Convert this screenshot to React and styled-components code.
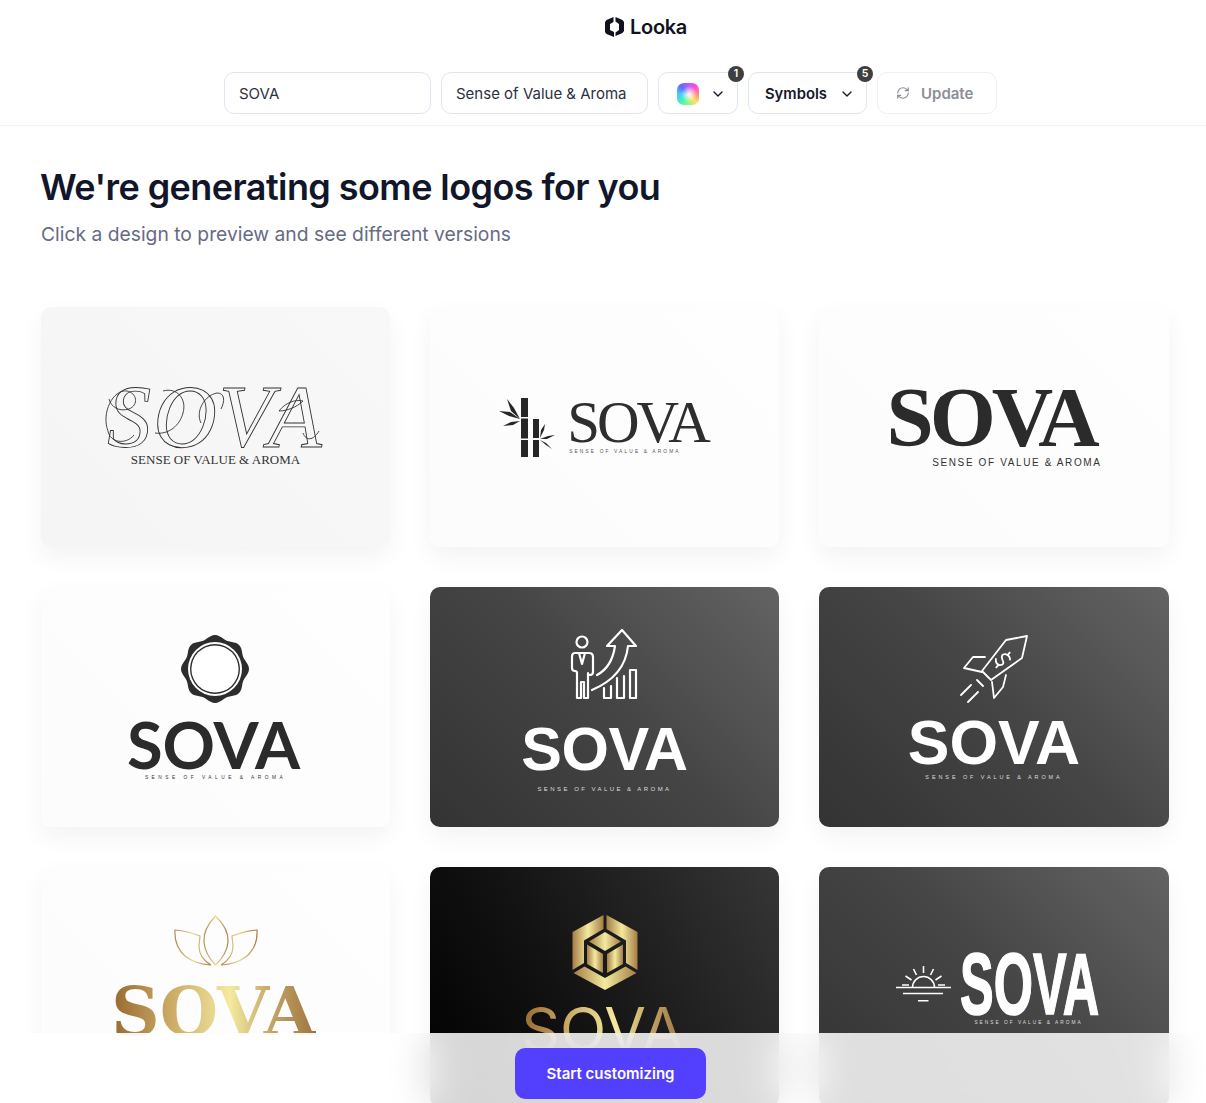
import React from "react";
import styled, { createGlobalStyle } from "styled-components";
import { ChevronDown, RefreshCw } from "lucide-react";

const GlobalStyle = createGlobalStyle`
  html, body {
    margin: 0;
    padding: 0;
    height: 100%;
    overflow: hidden;
    background: #fff;
    font-family: Inter, "Liberation Sans", sans-serif;
  }
  * { box-sizing: border-box; }
`;

const GOLD = "linear-gradient(90deg, #95682f 0%, #c9a863 28%, #f3ea9f 58%, #c5a566 78%, #9c7440 100%)";
const SERIF = '"Liberation Serif", serif';
const ARIAL = '"Liberation Sans", sans-serif';

const Page = styled.div`
  height: 100vh;
  overflow: hidden;
  color: #12162a;
`;

const Header = styled.header`
  height: 126px;
  border-bottom: 1px solid #f1f2f5;
  padding-top: 15px;
`;

const Brand = styled.div`
  display: flex;
  align-items: center;
  gap: 6px;
  padding-left: 605px;
  height: 24px;
  font-size: 20px;
  font-weight: 600;
  letter-spacing: -0.3px;
  color: #10131f;
`;

const Toolbar = styled.div`
  display: flex;
  gap: 10px;
  margin-top: 33px;
  padding-left: 224px;
`;

const Field = styled.div`
  position: relative;
  display: flex;
  align-items: center;
  width: ${(p) => p.$w}px;
  height: 42px;
  padding: 0 14px;
  border: 1px solid ${(p) => (p.$muted ? "#eef0f5" : "#dfe5f2")};
  border-radius: 10px;
  background: #fff;
  font-size: 15px;
  color: #2d3140;
`;

const Select = styled(Field)`
  justify-content: space-between;
  padding: 1px 11px 0 ${(p) => p.$left}px;
  font-size: 14.8px;
  font-weight: 600;
  color: #14182a;
`;

const UpdateButton = styled(Field)`
  gap: 11px;
  padding: 0 0 0 18px;
  font-size: 15px;
  font-weight: 600;
  color: #8b8e96;
`;

const Swatch = styled.span`
  width: 22px;
  height: 22px;
  border-radius: 7px;
  background:
    radial-gradient(circle at 55% 50%, rgba(255, 255, 255, 0.95) 0%, rgba(255, 255, 255, 0) 50%),
    conic-gradient(#b45cff, #ff4fd0 45deg, #ff8a80 90deg, #ffe060 135deg, #8cf58a 180deg, #3ff0c0 225deg, #4cc8ff 270deg, #5a70ff 315deg, #b45cff);
`;

const Badge = styled.span`
  position: absolute;
  top: -7px;
  right: -7px;
  width: 16px;
  height: 16px;
  border-radius: 50%;
  background: #3f3f3f;
  color: #fff;
  font-size: 10.5px;
  font-weight: 600;
  line-height: 16px;
  text-align: center;
`;

const Main = styled.main`
  padding: 38px 37px 0 41px;
`;

const Title = styled.h1`
  margin: 0 0 0 -1px;
  font-size: 36px;
  line-height: 46px;
  font-weight: 600;
  letter-spacing: -0.58px;
  color: #12162a;
`;

const Subtitle = styled.p`
  margin: 10px 0 0;
  font-size: 19.3px;
  line-height: 28px;
  color: #666b84;
`;

const Grid = styled.div`
  display: grid;
  grid-template-columns: 349px 349px 350px;
  gap: 40px;
  margin-top: 59px;
`;

const tones = {
  grey: "linear-gradient(45deg, #f5f5f5, #f8f8f8)",
  light: "linear-gradient(45deg, #fcfcfc, #fefefe)",
  dark: "linear-gradient(45deg, #333 0%, #444 50%, #636363 100%)",
  black: "linear-gradient(60deg, #000 0%, #121212 40%, #363636 100%)",
};

const Card = styled.article`
  display: flex;
  flex-direction: column;
  align-items: center;
  height: 240px;
  padding-top: ${(p) => p.$top}px;
  border-radius: 10px;
  overflow: hidden;
  background: ${(p) => tones[p.$tone]};
  box-shadow: 0 10px 24px rgba(0, 0, 0, 0.05);
`;

const LogoRow = styled.div`
  display: flex;
  align-items: flex-start;
  gap: ${(p) => p.$gap}px;
  margin-left: ${(p) => p.$shift || 0}px;
`;

const LogoText = styled.div`
  position: relative;
  display: flex;
  flex-direction: column;
  align-items: ${(p) => p.$align || "center"};
  margin-top: ${(p) => p.$mt || 0}px;
  margin-left: ${(p) => p.$ml || 0}px;
`;

const IconSlot = styled.div`
  display: flex;
  margin-top: ${(p) => p.$mt || 0}px;
  margin-left: ${(p) => p.$ml || 0}px;
`;

const Word = styled.div`
  width: ${(p) => (p.$w ? `${p.$w}px` : "auto")};
  height: ${(p) => p.$h}px;
  margin-top: ${(p) => p.$mt || 0}px;
  margin-left: ${(p) => p.$ml || 0}px;
  font-family: ${(p) => p.$font || ARIAL};
  font-size: ${(p) => p.$size}px;
  font-weight: ${(p) => p.$weight || 400};
  font-style: ${(p) => (p.$italic ? "italic" : "normal")};
  line-height: ${(p) => p.$h}px;
  letter-spacing: ${(p) => p.$track || 0}px;
  white-space: nowrap;
  color: ${(p) => p.$color || "#2b2b2b"};
  transform: ${(p) => (p.$scale ? `scale(${p.$scale})` : "none")};
  transform-origin: left center;
  ${(p) => p.$outline && `-webkit-text-stroke: 0.9px ${p.$outline}; color: transparent;`}
  ${(p) => p.$heavy && `-webkit-text-stroke: ${p.$heavy}px ${p.$color};`}
  ${(p) =>
    p.$gold &&
    `background: ${GOLD}; -webkit-background-clip: text; background-clip: text; color: transparent;`}
`;

const Tagline = styled.div`
  margin-top: ${(p) => p.$mt || 0}px;
  margin-right: ${(p) => p.$mr || 0}px;
  margin-left: ${(p) => p.$ml || 0}px;
  font-family: ${(p) => p.$font || ARIAL};
  font-size: ${(p) => p.$size}px;
  line-height: 1.2;
  letter-spacing: ${(p) => p.$track}px;
  white-space: nowrap;
  color: ${(p) => p.$color || "#333"};
`;

const Swash = styled.svg`
  position: absolute;
  left: -10px;
  top: -4px;
  pointer-events: none;
`;

const Footer = styled.footer`
  position: fixed;
  left: 0;
  right: 0;
  bottom: 0;
  height: 70px;
  display: flex;
  justify-content: center;
  padding: 15px 0 0 15px;
  background: rgba(255, 255, 255, 0.84);
  backdrop-filter: blur(20px);
`;

const CustomizeButton = styled.button`
  width: 191px;
  height: 51px;
  border: 0;
  border-radius: 10px;
  background: #5340ff;
  color: #fff;
  font-family: inherit;
  font-size: 15px;
  font-weight: 600;
`;

const LookaMark = () => (
  <svg width="19" height="20" viewBox="0 0 19 20" fill="#10131f">
    <path d="M8.500 0 1.500 3 0 5v10l1.500 2 7.500 3v-5l-4-2V7l3.500-2z" />
    <path d="M10.500 0v4.500L14 7v6l-3.500 2.500V19l7-3 1.500-2V5l-1.500-2z" />
  </svg>
);

const Bamboo = () => (
  <svg width="56" height="60" viewBox="0 0 56 60" fill="#262626">
    <rect x="22" y="0" width="7" height="19" />
    <rect x="22" y="20.5" width="7" height="20" />
    <rect x="22" y="42" width="7" height="17" />
    <rect x="34" y="21" width="6" height="19" />
    <rect x="34" y="42" width="6" height="17" />
    <path d="M21 21 15 10 8 1 12 13z" />
    <path d="M21 21 11 14 0 13 10 18z" />
    <path d="M21 23 12 24 4 28 14 27z" />
    <path d="M41 40 45 32 46 26 42 32z" />
    <path d="M41 41 49 38 56 37 48 41z" />
    <path d="M41 42 47 47 53 51 47 45z" />
  </svg>
);

// wavy wax seal outline, eight lobes
const sealPath = () => {
  const pts = [];
  for (let i = 0; i < 96; i++) {
    const a = (i / 96) * Math.PI * 2;
    const r = 32.3 + 1.7 * Math.cos(8 * a);
    pts.push(`${(34 + r * Math.sin(a)).toFixed(2)} ${(34 - r * Math.cos(a)).toFixed(2)}`);
  }
  return `M${pts.join("L")}Z`;
};

const Seal = () => (
  <svg width="68" height="68" viewBox="0 0 68 68">
    <path d={sealPath()} fill="#2d2d2d" />
    <circle cx="34" cy="34" r="27" fill="#fff" />
    <circle cx="34" cy="34" r="25" fill="#2d2d2d" />
    <circle cx="34" cy="34" r="23.6" fill="#fff" />
  </svg>
);

const Growth = () => (
  <svg width="70" height="72" viewBox="0 0 70 72" fill="none" stroke="#fff" strokeWidth="2.2" strokeLinejoin="round" strokeLinecap="round">
    <circle cx="12" cy="14" r="5.5" />
    <path d="M5 25h14q4 0 4 4v15q0 3-3 3-2 0-2-2V70h-4V54h-3v16H7V45q0-2-2-2-3 0-3-3V29q0-4 3-4z" />
    <path d="m9 25 3 11 3-11" />
    <path d="M27 47q15-8 18-29h-8L52 2l14 16h-8q-3 30-36 44" />
    <path d="M34 60v10h7V58M47 50v20h7V48M60 42h6v28h-6z" />
  </svg>
);

const Rocket = () => (
  <svg width="68" height="68" viewBox="0 0 68 68" fill="none" stroke="#fff" strokeWidth="1.8" strokeLinejoin="round" strokeLinecap="round">
    <path d="M67 1 46 5 22 36l9 9 31-22z" />
    <path d="M25 22H13L4 33l18 4M46 40l-3 12-9 11-2-16" />
    <path d="m11 50-10 10M17 45l6 6M18 57 8 67" />
    <g transform="translate(43 25) rotate(42)">
      <path d="M5-5Q2-8-2-6q-4 3 1 6 6 2 2 6-4 2-7-2M0-10v3M0 7v3" />
    </g>
  </svg>
);

const Lotus = () => (
  <svg width="84" height="52" viewBox="0 0 84 52" fill="none" stroke="url(#lotusGold)" strokeWidth="1.2">
    <defs>
      <linearGradient id="lotusGold" x1="0" y1="0" x2="1" y2="0">
        <stop offset="0" stopColor="#b08d57" />
        <stop offset="0.5" stopColor="#e9d78e" />
        <stop offset="1" stopColor="#a97f45" />
      </linearGradient>
    </defs>
    <path d="M41.5 1Q29 14 30 27q1 12 11.500 23Q53 39 54 27 55 14 41.500 1z" />
    <path d="M26 21Q14 16 1 15q-1 16 10 26 10 8 26 9-12-7-12-19z" />
    <path d="M58 21q12-5 25-6 1 16-10 26-10 8-26 9 12-7 12-19z" />
  </svg>
);

const HexCube = () => (
  <svg width="66" height="75" viewBox="0 0 66 75">
    <defs>
      <linearGradient id="hexGold" x1="0" y1="0" x2="1" y2="0">
        <stop offset="0" stopColor="#a57d45" />
        <stop offset="0.5" stopColor="#f3ea9f" />
        <stop offset="1" stopColor="#a57d45" />
      </linearGradient>
    </defs>
    <g fill="url(#hexGold)">
      <path d="M31.500 0v14L12 25.500V48L.5 55V17z" />
      <path d="M34.500 0v14L54 25.500V48l11.500 7V17z" />
      <path d="m1.500 58 11-6.500L33 63l20.500-11.500 11 6.500L33 75z" />
      <path d="m33 17 16 9.500L33 36l-16-9.500z" />
      <path d="m15 29.500 16 9.500v19l-16-9z" />
      <path d="m51 29.500-16 9.500v19l16-9z" />
    </g>
  </svg>
);

const Sunrise = () => (
  <svg width="56" height="36" viewBox="0 0 56 36" fill="none" stroke="#fff" strokeWidth="1.6">
    <path d="M0 21.500h55M7 27.500h40M22 34.700h10.500" />
    <path d="M16.500 21.500a11 11 0 0 1 22 0" />
    <path d="M27.500 7V0M20.500 9l-3-6M34.500 9l3-6M15.500 14l-6-4M39.500 14l6-4M13 19H6M42 19h7" />
  </svg>
);

// the loose calligraphy strokes around the script wordmark
const ScriptSwash = () => (
  <Swash width="230" height="70" viewBox="0 0 230 70" fill="none" stroke="#333" strokeWidth="0.9">
    <path d="M11 48C4 30 16 6 30 8c10 2 12 14 2 18-10 3-18-2-20-10" />
    <path d="M11 48c2 12 18 14 26 4" />
    <path d="M66 8c14-4 24 8 20 22-3 12-14 22-28 20" />
    <path d="M104 40c-6-12 4-28 16-30 8 0 8 8 4 16" />
    <path d="M182 28c6-8 16-12 24-10-6 6-16 10-24 10z" />
    <path d="M206 50c3 8 10 8 16-2" />
  </Swash>
);

const App = () => (
  <Page>
    <GlobalStyle />
    <Header>
      <Brand>
        <LookaMark />
        Looka
      </Brand>
      <Toolbar>
        <Field $w={207}>SOVA</Field>
        <Field $w={207}>Sense of Value &amp; Aroma</Field>
        <Select $w={80} $left={18}>
          <Swatch />
          <ChevronDown size={16} strokeWidth={2} />
          <Badge>1</Badge>
        </Select>
        <Select $w={119} $left={16}>
          Symbols
          <ChevronDown size={16} strokeWidth={2} />
          <Badge>5</Badge>
        </Select>
        <UpdateButton $w={120} $muted>
          <RefreshCw size={14} strokeWidth={2} />
          Update
        </UpdateButton>
      </Toolbar>
    </Header>
    <Main>
      <Title>We're generating some logos for you</Title>
      <Subtitle>Click a design to preview and see different versions</Subtitle>
      <Grid>
        <Card $tone="grey" $top={80}>
          <LogoText>
            <ScriptSwash />
            <Word $font={SERIF} $size={88} $h={60} $italic $outline="#333" $track={2}>
              SOVA
            </Word>
            <Tagline $font={SERIF} $size={13} $track={0} $mt={5}>
              SENSE OF VALUE &amp; AROMA
            </Tagline>
          </LogoText>
        </Card>
        <Card $tone="light" $top={91}>
          <LogoRow $gap={12} $shift={-2}>
            <Bamboo />
            <LogoText $align="flex-start" $mt={2}>
              <Word $font={SERIF} $size={59} $h={44} $track={-3.1} $color="#2e2e2e">
                SOVA
              </Word>
              <Tagline $size={4.8} $track={2.15} $mt={5} $ml={2} $color="#555">
                SENSE OF VALUE &amp; AROMA
              </Tagline>
            </LogoText>
          </LogoRow>
        </Card>
        <Card $tone="light" $top={77}>
          <LogoText $align="flex-end" $ml={-6}>
            <Word $font={SERIF} $size={85} $h={66} $weight={700} $track={-4}>
              SOVA
            </Word>
            <Tagline $size={10} $track={1.62} $mt={7} $mr={-6}>
              SENSE OF VALUE &amp; AROMA
            </Tagline>
          </LogoText>
        </Card>
        <Card $tone="light" $top={48}>
          <IconSlot $ml={-1}>
            <Seal />
          </IconSlot>
          <Word $font="Lato, sans-serif" $size={65} $h={56} $weight={700} $mt={13} $ml={-4}>
            SOVA
          </Word>
          <Tagline $size={4.8} $track={3.5} $mt={3} $color="#333">
            SENSE OF VALUE &amp; AROMA
          </Tagline>
        </Card>
        <Card $tone="dark" $top={41}>
          <Growth />
          <Word $size={61} $h={54} $weight={700} $mt={22} $track={-0.5} $color="#fff">
            SOVA
          </Word>
          <Tagline $size={6} $track={2.45} $mt={10} $color="#ddd">
            SENSE OF VALUE &amp; AROMA
          </Tagline>
        </Card>
        <Card $tone="dark" $top={48}>
          <Rocket />
          <Word $size={62.5} $h={56} $weight={700} $mt={11} $color="#fff">
            SOVA
          </Word>
          <Tagline $size={5.5} $track={2.9} $mt={4} $color="#ddd">
            SENSE OF VALUE &amp; AROMA
          </Tagline>
        </Card>
        <Card $tone="light" $top={48}>
          <Lotus />
          <Word $font='"DejaVu Serif", serif' $size={67} $h={60} $weight={700} $mt={15} $ml={-4} $gold>
            SOVA
          </Word>
        </Card>
        <Card $tone="black" $top={48}>
          <HexCube />
          <Word $font="Inter, sans-serif" $size={60.5} $h={52} $mt={13} $ml={-4} $gold>
            SOVA
          </Word>
        </Card>
        <Card $tone="dark" $top={84}>
          <LogoRow $gap={8} $shift={5}>
            <IconSlot $mt={15}>
              <Sunrise />
            </IconSlot>
            <LogoText>
              <Word $size={87} $h={66} $w={138} $weight={700} $scale="0.58, 1" $heavy={1.6} $color="#fff">
                SOVA
              </Word>
              <Tagline $size={4.8} $track={2} $mt={3} $color="#ddd">
                SENSE OF VALUE &amp; AROMA
              </Tagline>
            </LogoText>
          </LogoRow>
        </Card>
      </Grid>
    </Main>
    <Footer>
      <CustomizeButton>Start customizing</CustomizeButton>
    </Footer>
  </Page>
);

export default App;
